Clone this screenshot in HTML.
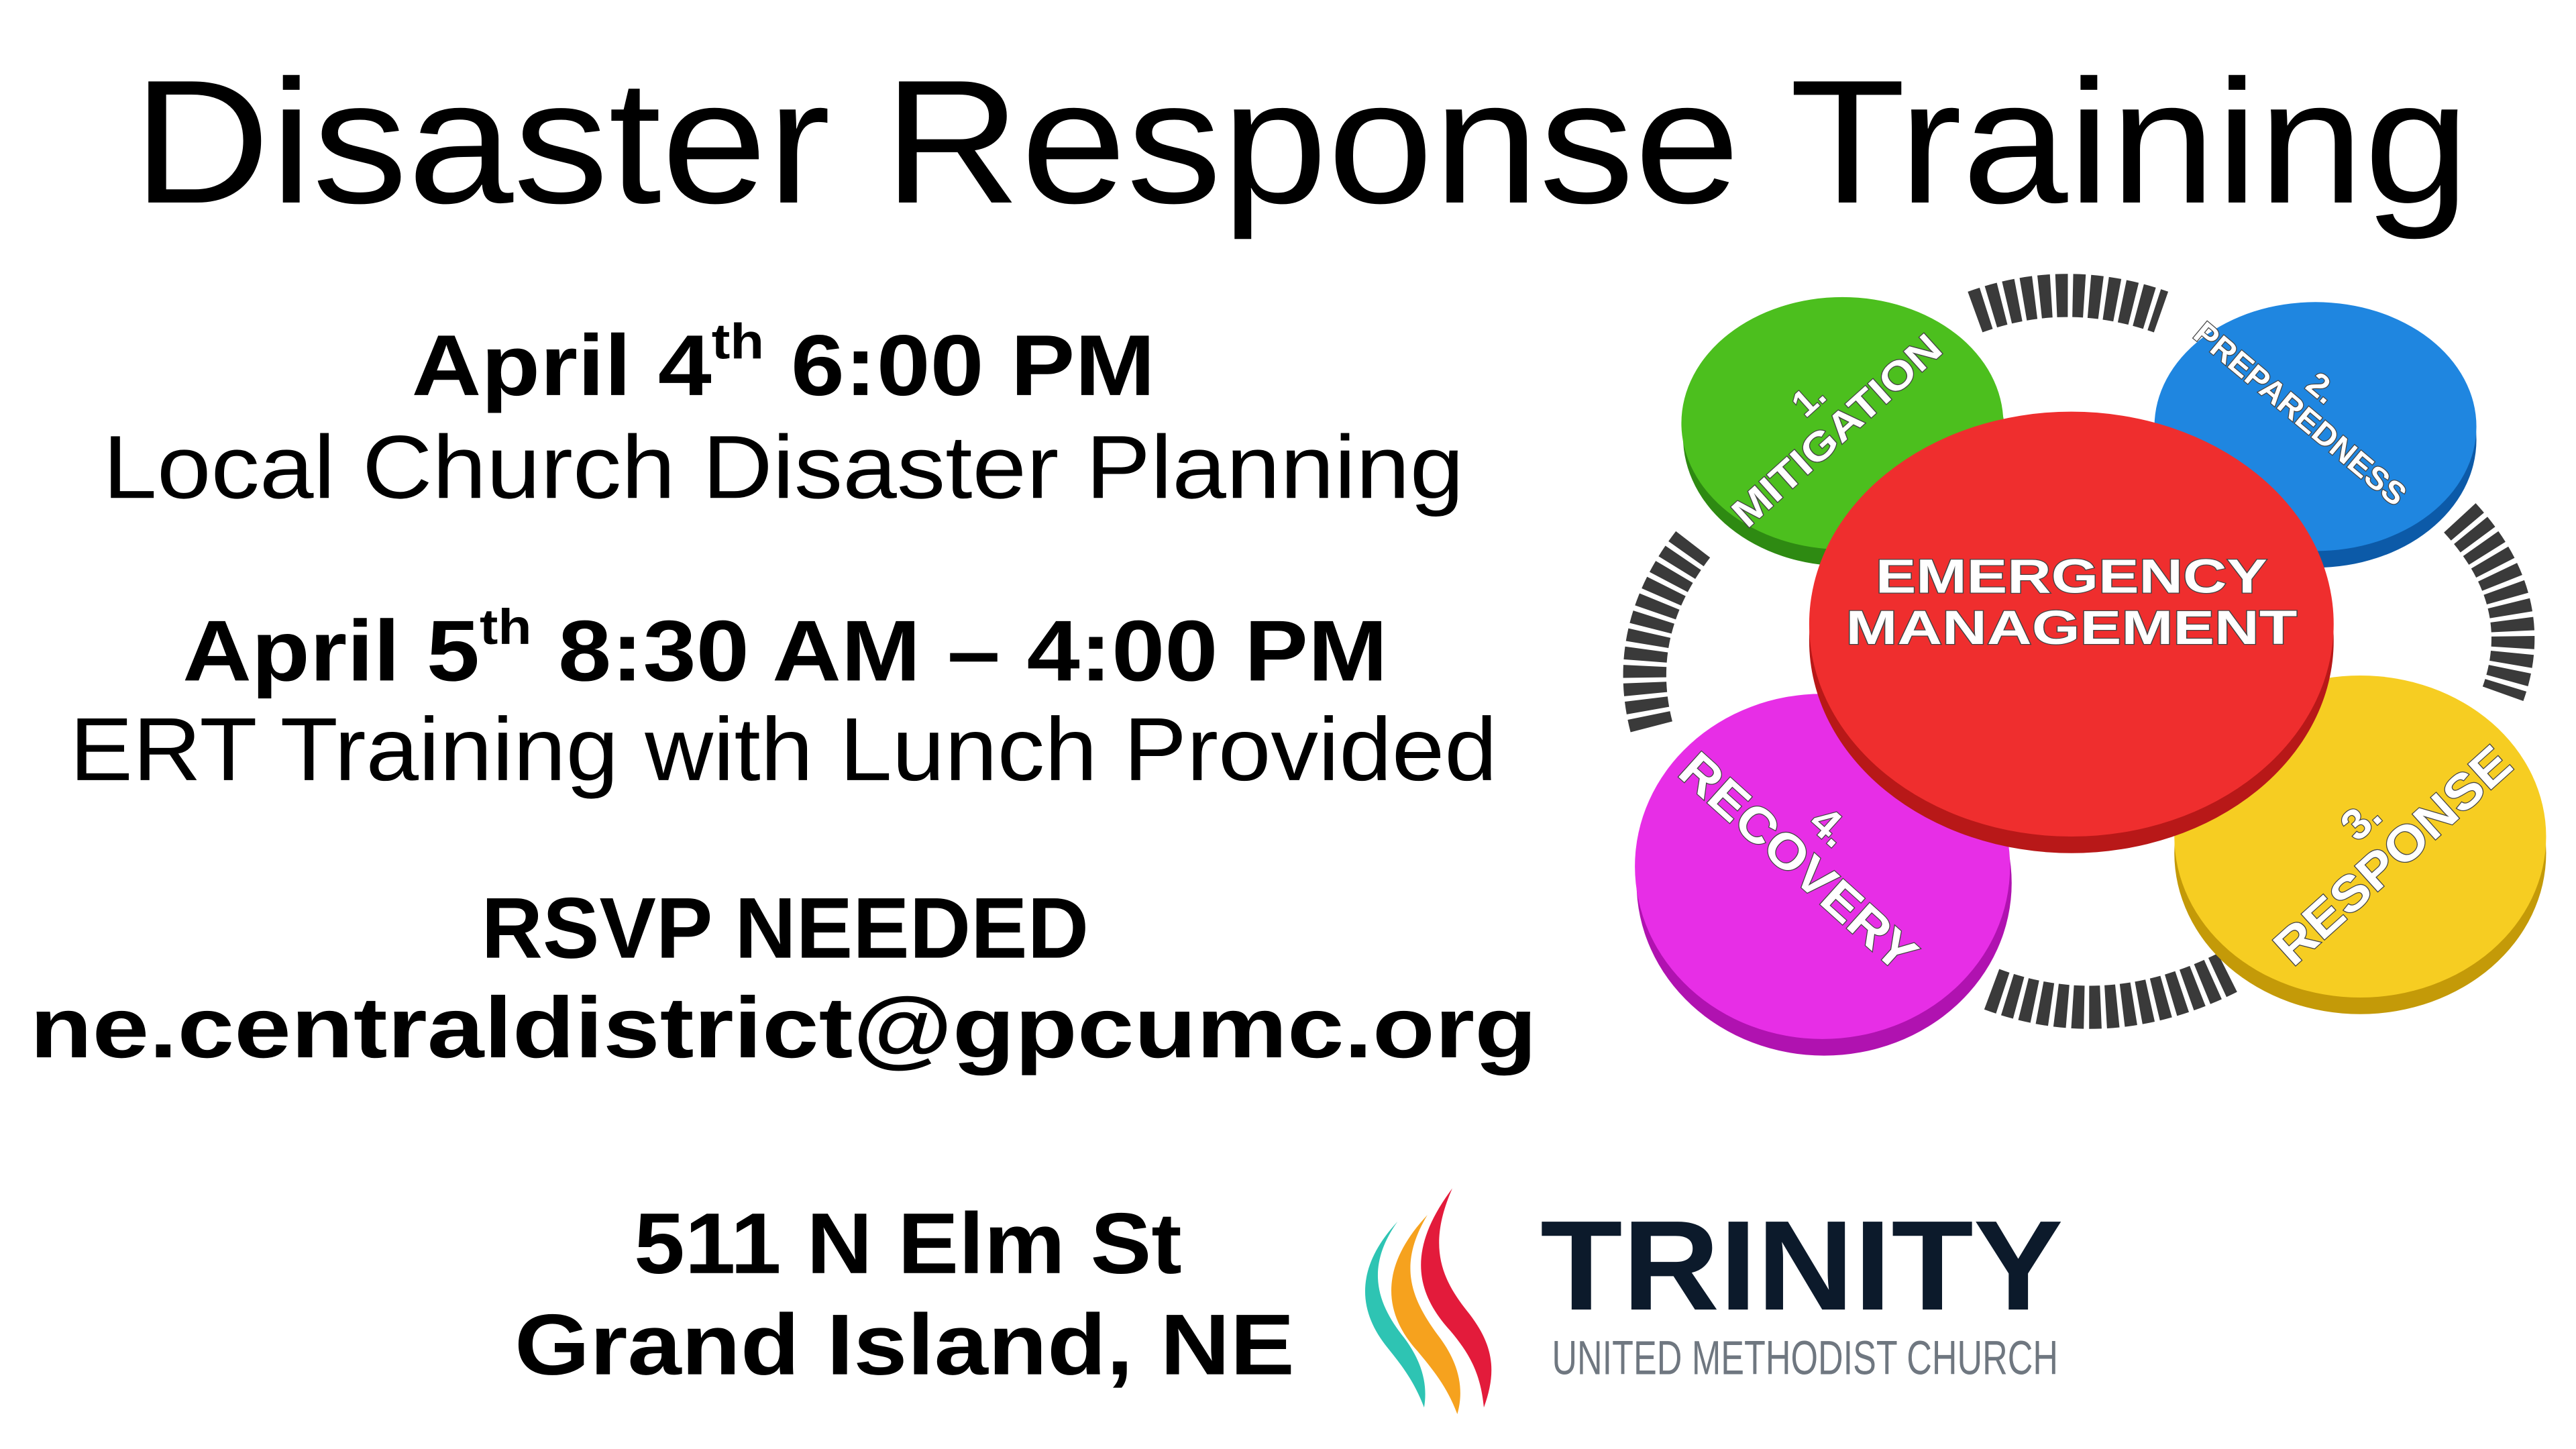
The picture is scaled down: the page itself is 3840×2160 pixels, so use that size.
<!DOCTYPE html>
<html><head><meta charset="utf-8"><style>
html,body{margin:0;padding:0;background:#fff;}
svg{display:block;}
text{font-family:"Liberation Sans",sans-serif;}
</style></head><body>
<svg width="3840" height="2160" viewBox="0 0 1552 873" xmlns="http://www.w3.org/2000/svg">
<rect width="1552" height="873" fill="#fff"/>
<text x="80" y="122" font-size="106" textLength="1408" lengthAdjust="spacingAndGlyphs" fill="#000">Disaster Response Training</text>
<g font-weight="bold" fill="#000">
<text x="248" y="238" font-size="52" textLength="448" lengthAdjust="spacingAndGlyphs">April 4<tspan font-size="30" dy="-22">th</tspan><tspan dy="22"> 6:00 PM</tspan></text>
<text x="110" y="410" font-size="52" textLength="726" lengthAdjust="spacingAndGlyphs">April 5<tspan font-size="30" dy="-22">th</tspan><tspan dy="22"> 8:30 AM – 4:00 PM</tspan></text>
<text x="290" y="577" font-size="52" textLength="366" lengthAdjust="spacingAndGlyphs">RSVP NEEDED</text>
<text x="18" y="637" font-size="52" textLength="908" lengthAdjust="spacingAndGlyphs">ne.centraldistrict@gpcumc.org</text>
<text x="382" y="767" font-size="52" textLength="330" lengthAdjust="spacingAndGlyphs">511 N Elm St</text>
<text x="310" y="828" font-size="52" textLength="470" lengthAdjust="spacingAndGlyphs">Grand Island, NE</text>
</g>
<g fill="#000">
<text x="62" y="300" font-size="54" textLength="820" lengthAdjust="spacingAndGlyphs">Local Church Disaster Planning</text>
<text x="42" y="470" font-size="54" textLength="860" lengthAdjust="spacingAndGlyphs">ERT Training with Lunch Provided</text>
</g>
<g fill="none" stroke="#3a3a3a" stroke-width="26" stroke-dasharray="7 3">
<path d="M1190 188 Q1245 168 1302 188"/>
<path d="M1482 312 Q1528 362 1508 418"/>
<path d="M1200 596 Q1270 622 1342 586"/>
<path d="M1020 328 Q980 380 995 438"/>
</g>
<ellipse cx="1111" cy="263" rx="97" ry="78" fill="#2e8a12"/>
<ellipse cx="1110" cy="255" rx="97" ry="76" fill="#4cbf1e"/>
<ellipse cx="1395" cy="265" rx="97" ry="77" fill="#0c5aa8"/>
<ellipse cx="1395" cy="257" rx="97" ry="75" fill="#1f86e0"/>
<ellipse cx="1099" cy="532" rx="113" ry="104" fill="#b012b0"/>
<ellipse cx="1098" cy="522" rx="113" ry="104" fill="#e72ee6"/>
<ellipse cx="1422" cy="514" rx="112" ry="97" fill="#c49a08"/>
<ellipse cx="1422" cy="504" rx="112" ry="97" fill="#f6cd22"/>
<ellipse cx="1248" cy="386" rx="158" ry="128" fill="#b81818"/>
<ellipse cx="1248" cy="376" rx="158" ry="128" fill="#ef2e2e"/>
<g fill="#fff" font-weight="bold" stroke="#444" stroke-width="1" paint-order="stroke">
<text x="1248" y="357" font-size="29" text-anchor="middle" textLength="236" lengthAdjust="spacingAndGlyphs">EMERGENCY</text>
<text x="1248" y="388" font-size="29" text-anchor="middle" textLength="272" lengthAdjust="spacingAndGlyphs">MANAGEMENT</text>
<g transform="translate(1100,252) rotate(-42)">
<text x="0" y="-8" font-size="22" text-anchor="middle">1.</text>
<text x="0" y="18" font-size="24" text-anchor="middle" textLength="160" lengthAdjust="spacingAndGlyphs">MITIGATION</text></g>
<g transform="translate(1392,242) rotate(40)">
<text x="0" y="-4" font-size="20" text-anchor="middle">2.</text>
<text x="0" y="16" font-size="19" text-anchor="middle" textLength="160" lengthAdjust="spacingAndGlyphs">PREPAREDNESS</text></g>
<g transform="translate(1090,512) rotate(42)">
<text x="0" y="-10" font-size="26" text-anchor="middle">4.</text>
<text x="0" y="20" font-size="30" text-anchor="middle" textLength="180" lengthAdjust="spacingAndGlyphs">RECOVERY</text></g>
<g transform="translate(1435,508) rotate(-42)">
<text x="0" y="-10" font-size="26" text-anchor="middle">3.</text>
<text x="0" y="20" font-size="30" text-anchor="middle" textLength="180" lengthAdjust="spacingAndGlyphs">RESPONSE</text></g>
</g>
<path d="M875 716 C860 750 868 770 884 790 C900 810 902 826 894 848 C892 826 884 814 874 802 C852 778 848 752 875 716 Z" fill="#e31b3b"/>
<path d="M860 732 C842 762 850 782 866 804 C880 822 882 838 878 852 C872 836 864 826 854 814 C834 792 830 764 860 732 Z" fill="#f6a21e"/>
<path d="M846 756 C826 784 834 806 850 826 C862 842 864 856 862 868 C856 852 848 842 840 832 C822 810 820 784 846 756 Z" fill="#2ec4b3" transform="translate(-4,-20)"/>
<text x="928" y="789" font-size="77" font-weight="bold" fill="#0c1a2b" textLength="315" lengthAdjust="spacingAndGlyphs">TRINITY</text>
<text x="935" y="828" font-size="29" fill="#6f7780" textLength="305" lengthAdjust="spacingAndGlyphs">UNITED METHODIST CHURCH</text>
</svg>
</body></html>
